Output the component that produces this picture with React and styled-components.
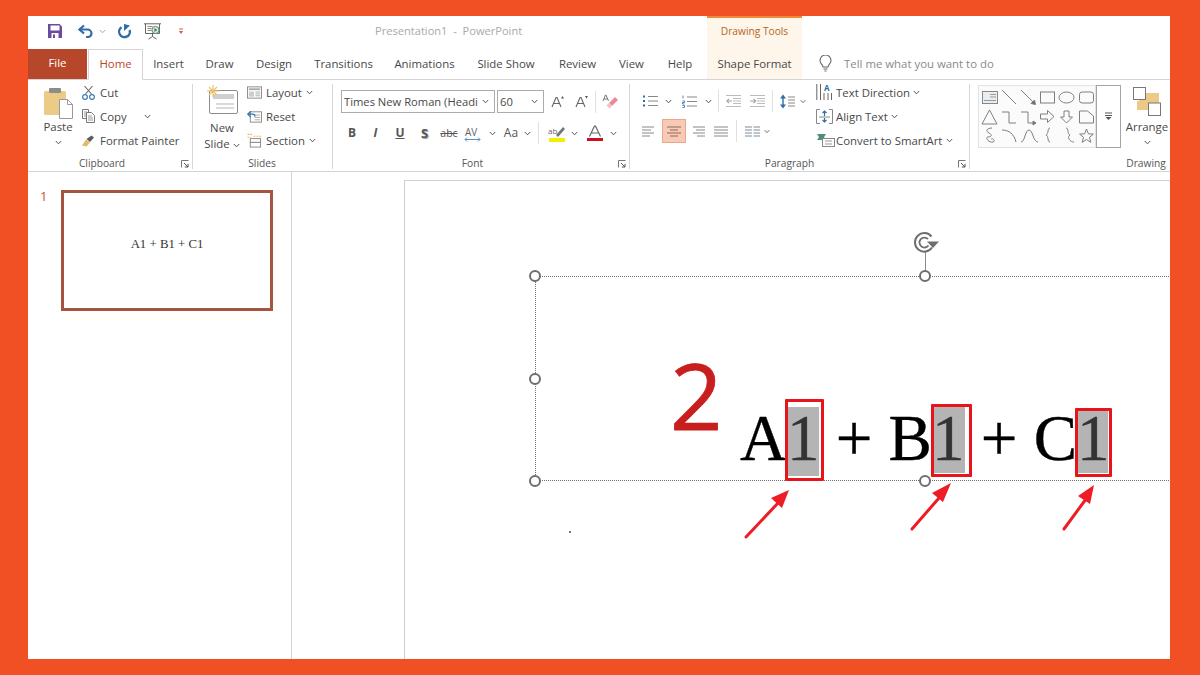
import React from "react";
import styled, { createGlobalStyle } from "styled-components";

const Global = createGlobalStyle`
  html, body { margin: 0; padding: 0; width: 1200px; height: 675px; overflow: hidden; background: #F15025; }
  #root { width: 1200px; height: 675px; }
  * { box-sizing: border-box; }
`;

const Page = styled.div`
  width: 1200px; height: 675px; background: #F15025;
  padding: 16px 30px 16px 28px;
  font-family: "Open Sans", "Liberation Sans", sans-serif;
  font-size: 11.4px; color: #484848;
`;
const Win = styled.div`
  width: 1142px; height: 643px; background: #fff; overflow: hidden;
  display: flex; flex-direction: column;
`;

/* title bar */
const TitleBar = styled.div`display: flex; height: 33px; flex: none; padding-left: 15px;`;
const Cell = styled.div`
  width: ${p => p.$w}px; margin-left: ${p => p.$ml || 0}px; flex: none;
  display: flex; align-items: center; justify-content: center;
  height: ${p => p.$h || 24}px;
`;
const DocTitle = styled.div`
  margin-left: 189px; width: 332px; color: #a9a9a9; line-height: 30px; font-size: 11.1px; white-space: pre; flex: none;
`;
const ContextHead = styled.div`
  width: 95px; background: #FEF5EB; border-top: 2px solid #EE8B3A; color: #B5651D;
  font-size: 10.2px; text-align: center; line-height: 26px; flex: none;
`;

/* tabs */
const TabBar = styled.div`display: flex; height: 31px; flex: none; border-bottom: 1px solid #d4d4d4; position: relative;`;
const FileTab = styled.div`
  width: 59px; height: 30px; background: #B7472A; color: #fff; text-align: center; line-height: 28px; margin-right: 1px;
`;
const Tab = styled.div`
  width: ${p => p.$w}px; flex: none; height: 31px; text-align: center; line-height: 30px; color: #484848;
`;
const HomeTab = styled(Tab)`
  border: 1px solid #d4d4d4; border-bottom: 1px solid #fff; color: #B7472A; line-height: 28px;
`;
const ContextTab = styled(Tab)`background: #FEF5EB; margin-left: 2px; height: 30px;`;
const TellMe = styled.div`
  display: flex; align-items: center; gap: 12px; margin-left: 17px; color: #8a8a8a; height: 29px;
`;

/* ribbon */
const Ribbon = styled.div`display: flex; height: 92px; flex: none; border-bottom: 1px solid #d4d4d4;`;
const Group = styled.div`
  width: ${p => p.$w}px; flex: none; position: relative; display: flex; flex-direction: column;
  &::after {
    content: ""; display: ${p => p.$last ? "none" : "block"};
    position: absolute; right: 0; top: 4px; bottom: 2px; width: 1px; background: #d6d6d6;
  }
`;
const GroupBody = styled.div`
  flex: 1; display: flex; padding-left: ${p => p.$pl || 0}px; padding-top: ${p => p.$pt || 0}px; min-height: 0;
`;
const GroupLabel = styled.div`
  height: 18px; line-height: 20px; flex: none; text-align: center; font-size: 10.2px; color: #555;
  padding-right: ${p => p.$pr || 0}px;
`;
const DrawingLabel = styled(GroupLabel)`width: 60px; margin-left: 146px;`;
const Launcher = styled.div`position: absolute; right: 4px; bottom: 3px; display: flex;`;
const Stack = styled.div`display: flex; flex-direction: column; margin-left: ${p => p.$ml || 0}px; flex: none;`;
const SmallBtn = styled.div`
  height: 24px; display: flex; align-items: center; gap: ${p => p.$gap || 4}px; white-space: nowrap;
`;
const IconSlot = styled.span`width: ${p => p.$w || 15}px; display: flex; justify-content: center; flex: none;`;
const LargeBtn = styled.div`
  width: ${p => p.$w}px; flex: none; margin-left: ${p => p.$ml || 0}px;
  display: flex; flex-direction: column; align-items: center; line-height: 16px;
`;
const LargeIcon = styled.div`height: ${p => p.$h || 38}px; display: flex; align-items: flex-end; margin-bottom: ${p => p.$mb || 0}px;`;
const NoWrapLine = styled.div`white-space: nowrap;`;
const Row = styled.div`display: flex; align-items: center; height: ${p => p.$h}px; margin-top: ${p => p.$mt || 0}px;`;
const FontBox = styled.div`
  width: ${p => p.$w}px; height: 23px; border: 1px solid #ababab; margin-left: ${p => p.$ml || 0}px; flex: none;
  display: flex; align-items: center; justify-content: space-between; padding: 0 5px 0 2px; font-size: 11.2px; white-space: nowrap;
`;
const Sep = styled.div`width: 1px; height: ${p => p.$h || 22}px; background: #e0e0e0; margin: 0 ${p => p.$mx || 3}px; flex: none;`;
const ActiveCell = styled(Cell)`background: #F8C9B5; border: 1px solid #E9A88E;`;
const Glyph = styled.span`
  font-family: ${p => p.$serif ? '"Liberation Serif", serif' : '"Open Sans", sans-serif'};
  font-weight: ${p => p.$bold ? 700 : 400}; font-style: ${p => p.$italic ? "italic" : "normal"};
  font-size: ${p => p.$size || 12}px; color: ${p => p.$color || "#555"};
  text-decoration: ${p => p.$deco || "none"}; line-height: 1;
  text-shadow: ${p => p.$shadow ? "1px 1px 1px #999" : "none"};
`;
const Gallery = styled.div`
  width: 118px; height: 63px; border: 1px solid #e2e2e2; background: #fbfbfb; margin-left: 8px; margin-top: 5px; flex: none; display: flex;
`;
const GalleryMore = styled.div`
  width: 25px; height: 63px; border: 1px solid #a5a5a5; margin-top: 5px; flex: none; display: flex; align-items: center; justify-content: center;
`;

/* lower area */
const Lower = styled.div`flex: 1; display: flex; min-height: 0;`;
const Panel = styled.div`
  width: 264px; flex: none; border-right: 1px solid #d4d4d4; padding: 18px 0 0 12px; display: flex; align-items: flex-start;
`;
const ThumbNum = styled.div`width: 21px; color: #C4553D; font-size: 13px; line-height: 12px;`;
const Thumb = styled.div`
  width: 212px; height: 121px; border: 3px solid #A5543F; display: flex; justify-content: center; padding-top: 44px;
  font-family: "Liberation Serif", serif; font-size: 12.8px; color: #333; white-space: pre;
`;
const Stage = styled.div`flex: 1; overflow: hidden; padding: 8px 0 0 112px;`;
const Slide = styled.div`
  width: 1000px; height: 600px; border: 1px solid #cfcfcf; position: relative; background: #fff;
`;
/* slide canvas items: origin of Canvas is x=406, y=181 on the page */
const Canvas = styled.div`position: absolute; left: 1px; top: 0; width: 998px; height: 598px;`;
const Frame = styled.div`
  position: absolute; left: 129px; top: 95px; width: 900px; height: 205px;
  border: 1px dotted #6f6f6f;
`;
const Handle = styled.div`
  position: absolute; left: ${p => p.$x - 6}px; top: ${p => p.$y - 6}px; width: 12px; height: 12px;
  border: 2px solid #6e6e6e; border-radius: 50%; background: #fff;
`;
const RotateStem = styled.div`position: absolute; left: 519px; top: 70px; width: 1px; height: 25px; background: #8a8a8a;`;
const RotateIcon = styled.div`position: absolute; left: 508px; top: 51px; display: flex;`;
const BigTwo = styled.div`
  position: absolute; left: 264px; top: 149px; font-family: "Open Sans", sans-serif; font-size: 92px; line-height: 130px; color: #C81E1E;
  -webkit-text-stroke: 0.8px #C81E1E;
`;
const Highlight = styled.div`
  position: absolute; left: ${p => p.$x}px; top: ${p => p.$y}px; width: ${p => p.$w}px; height: ${p => p.$h}px; background: #B4B4B4;
`;
const Formula = styled.div`
  position: absolute; left: 334px; top: 224.6px; font-family: "Liberation Serif", serif; font-size: 65px; line-height: 65px; color: #000; white-space: pre;
  -webkit-text-stroke: 0.4px #000;
`;
const One = styled.span`color: #333; -webkit-text-stroke: 0.4px #333;`;
const RedBox = styled.div`
  position: absolute; left: ${p => p.$x}px; top: ${p => p.$y}px; width: ${p => p.$w}px; height: ${p => p.$h}px;
  border: 3px solid #E8141C; border-radius: 1px;
`;
const Overlay = styled.svg`position: absolute; left: 0; top: 0; pointer-events: none;`;
const Speck = styled.div`position: absolute; left: 163px; top: 350px; width: 2px; height: 2px; background: #777;`;

/* icons */
const Chev = ({ c = "#555" }) => (
  <svg width="7" height="5" viewBox="0 0 7 5"><path d="M.8 1 3.5 3.8 6.2 1" fill="none" stroke={c} strokeWidth="1" /></svg>
);
const S = ({ w, h, children }) => <svg width={w} height={h} viewBox={`0 0 ${w} ${h}`} fill="none">{children}</svg>;

const SaveIco = () => <S w={14} h={14}><path d="M0 0h11.5L14 2.5V14H0z" fill="#6A4C9C" /><rect x="2.5" y="1.5" width="9" height="5" fill="#fff" /><rect x="3.5" y="9" width="7" height="5" fill="#fff" /><rect x="5" y="10.5" width="2" height="3.5" fill="#6A4C9C" /></S>;
const UndoIco = () => <S w={16} h={14}><path d="M6 1.5 1.5 5.5 6 9.5" stroke="#2F6DA8" strokeWidth="2.2" /><path d="M2 5.5h7.5a4 4 0 0 1 4 4v0a3.5 3.5 0 0 1-3.5 3.5H8" stroke="#2F6DA8" strokeWidth="2.2" /></S>;
const RedoIco = () => <S w={15} h={15}><path d="M4.5 3.2A5.4 5.4 0 1 0 12.6 6" stroke="#2F6DA8" strokeWidth="2.4" /><path d="M7 0v7L13 1.500z" fill="#2F6DA8" /></S>;
const PresentIco = () => <S w={18} h={17}><path d="M0 .8h17M1.5 1v9.5h14V1" stroke="#666" strokeWidth="1" /><path d="M3.5 3.5h5M3.5 5.5h4M3.5 7.5h4" stroke="#888" /><circle cx="11.5" cy="7" r="3.6" fill="#D7E8DC" stroke="#5E8A72" /><path d="m10.4 5 3 2-3 2z" fill="#4F7F66" /><path d="M8.5 10.500v3M4.500 16l4-2.500 4 2.500" stroke="#666" /></S>;
const TinyDrop = () => <S w={6} h={7}><path d="M1 1h4" stroke="#C8674E" /><path d="m.8 3 2.2 3 2.2-3z" fill="#C8674E" /></S>;

const PasteIco = () => <S w={29} h={31}><rect x="0" y="3" width="22" height="24" rx="1.5" fill="#EBCB85" /><rect x="5" y="0" width="12" height="5" rx="1" fill="#8C8C8C" /><path d="M15.5 11.5h8l5 5v14h-13z" fill="#fff" stroke="#9a9a9a" /><path d="M23.5 11.5v5h5" stroke="#9a9a9a" /></S>;
const CutIco = () => <S w={13} h={15}><path d="M2.5 1 9.5 9M10.5 1 3.5 9" stroke="#666" strokeWidth="1.1" /><circle cx="3" cy="12" r="2.4" stroke="#3F7FB5" strokeWidth="1.2" /><circle cx="10" cy="12" r="2.4" stroke="#3F7FB5" strokeWidth="1.2" /></S>;
const CopyIco = () => <S w={13} h={14}><path d="M.5.5h6v3M.5.5v9h3.5" stroke="#777" /><path d="M4.5 3.5h5l3 3v7h-8z" fill="#fff" stroke="#777" /><path d="M6 7h4M6 9h5M6 11h5M2 3h3M2 5h2M2 7h2" stroke="#999" /></S>;
const PainterIco = () => <S w={15} h={13}><path d="M1 11.5 5 5.5l4 3-3.5 4z" fill="#E3B96A" /><path d="m5.5 5 3.5 3 4-4.5-2.5-2z" fill="#5c5c5c" /></S>;
const NewSlideIco = () => <S w={31} h={29}><rect x="2.5" y="5.5" width="28" height="23" rx="1.5" fill="#fff" stroke="#8c8c8c" /><rect x="6" y="9" width="21" height="5" fill="#cfcfcf" /><path d="M9 19h18M9 23h18" stroke="#b5b5b5" /><path d="M6 0v12M0 6h12M2 2l8 8M10 2l-8 8" stroke="#EDC36A" strokeWidth="1.2" /></S>;
const LayoutIco = () => <S w={16} h={13}><rect x=".5" y=".5" width="15" height="12" fill="#fff" stroke="#888" /><rect x="2" y="2" width="12" height="2" fill="#aaa" /><rect x="2" y="5.5" width="5.5" height="5.5" fill="#ccc" /><path d="M9 6h5M9 8h5M9 10h5" stroke="#aaa" /></S>;
const ResetIco = () => <S w={16} h={13}><rect x="3.5" y="1.5" width="12" height="11" fill="#fff" stroke="#888" /><path d="M8 5h6M8 7.5h6M8 10h6" stroke="#aaa" /><path d="M4 1 .8 4 4 7M1 4h5a2.5 2.5 0 0 1 2.5 2.5" stroke="#2F78B4" strokeWidth="1.4" /></S>;
const SectionIco = () => <S w={16} h={15}><path d="M.5 1h5M.5 4h4M7 3h8" stroke="#E3B96A" strokeWidth="1.2" strokeDasharray="2 1" /><rect x="3.5" y="5.5" width="11" height="4" fill="#fff" stroke="#888" /><rect x="3.5" y="9.5" width="11" height="5" fill="#fff" stroke="#888" /></S>;
const LaunchIco = () => <S w={8} h={8}><path d="M.5 7.5v-7h7" stroke="#777" /><path d="m3 3 4 4M7 3.8V7H3.8" stroke="#555" /></S>;
const ClearIco = () => <S w={16} h={16}><path d="m7 9 6-6 3 3-6 6z" fill="#E98A99" /><path d="M4.5 11.5 7 9l3 3-2.5 2.5z" fill="#F3C0C8" /><path d="M1 7 3.5 1h.5L6.5 7M2 5h3.5" stroke="#777" /></S>;
const SizeA = ({ up }) => <S w={13} h={13}><path d="M1 12 5 2.5h1L10 12M2.6 8.5h5.8" stroke="#666" strokeWidth="1.1" /><path d={up ? "M10 3.5 11.5 1 13 3.5z" : "M10 1h3L11.5 3.5z"} fill="#555" /></S>;
const AVIco = () => <svg width="18" height="17" viewBox="0 0 18 17" fill="none"><text x="1" y="11" fontFamily="Open Sans, sans-serif" fontSize="10" fill="#666">AV</text><path d="M1 14.500h15" stroke="#5B8DBE" /><path d="M3 12.500 1 14.500l2 2M14 12.500l2 2-2 2" stroke="#5B8DBE" /></svg>;
const HighlightIco = () => <S w={18} h={17}><text x="0" y="9" fontFamily="Open Sans, sans-serif" fontSize="8" fill="#666">ab</text><path d="m8 10 7-8 2 2-7 8z" fill="#777" /><rect x="1" y="13" width="16" height="4" fill="#F4F000" /></S>;
const ColorA = () => <S w={16} h={16}><path d="M2.5 11.5 7.5 1h1l5 10.5M4.5 8h7" stroke="#666" strokeWidth="1.2" /><rect x="0" y="13" width="16" height="3" fill="#C8101E" /></S>;
const Bullets = () => <S w={15} h={12}><path d="M0 1.5h2M0 6h2M0 10.5h2" stroke="#2F6DA8" strokeWidth="2" /><path d="M5 1.5h10M5 6h10M5 10.5h10" stroke="#888" /></S>;
const Numbers = () => <S w={15} h={13}><path d="M1 .5v3M.5 6h2v1.5h-2V9h2M.5 10.5h2v2h-2" stroke="#2F6DA8" strokeWidth=".8" /><path d="M5 2h10M5 6.5h10M5 11h10" stroke="#888" /></S>;
const IndentDec = () => <S w={15} h={12}><path d="M0 .5h15M7 3.5h8M7 6h8M7 8.5h8M0 11.5h15" stroke="#bbb" /><path d="M6 6H1M3 3.8 .8 6 3 8.2" stroke="#9aa9b8" strokeWidth="1.2" /></S>;
const IndentInc = () => <S w={15} h={12}><path d="M0 .5h15M7 3.5h8M7 6h8M7 8.5h8M0 11.5h15" stroke="#bbb" /><path d="M0 6h5M3.5 3.8 5.7 6 3.5 8.2" stroke="#9aa9b8" strokeWidth="1.2" /></S>;
const LineSpace = () => <S w={15} h={15}><path d="M3 2v11" stroke="#2F6DA8" strokeWidth="1.4" /><path d="M0 4.5 3 .5l3 4zM0 10.5l3 4 3-4z" fill="#2F6DA8" /><path d="M8 3h7M8 6h7M8 9h7M8 12h7" stroke="#888" /></S>;
const Align = ({ lines, c = "#888" }) => <S w={14} h={11}>{lines.map(([a, b], i) => <path key={i} d={`M${a} ${1 + i * 3}H${b}`} stroke={c} />)}</S>;
const Columns = () => <S w={15} h={11}><path d="M0 1h7M0 4h7M0 7h7M0 10h7M8.5 1H15M8.5 4H15M8.5 7H15M8.5 10H15" stroke="#7d8b99" /></S>;
const TextDir = () => <S w={17} h={20}><path d="M.8 2v16M4.5 2v16M8 11v7M12 11v7M15.500 11v7" stroke="#666" /><text x="8" y="9" fontFamily="Open Sans, sans-serif" fontSize="8" fontWeight="700" fill="#2F6DA8">A</text></S>;
const AlignTextIco = () => <S w={17} h={15}><path d="M4 .5H.5v14H4M13 .5h3.5v14H13" stroke="#888" /><path d="M8.5 7V2M6.5 4l2-2 2 2M8.5 9v4M6.5 11l2 2 2-2" stroke="#2F6DA8" strokeWidth="1.2" /><path d="M3 8h11" stroke="#888" /></S>;
const SmartArt = () => <S w={18} h={14}><path d="M0 1h9l-2 3 2 3H0l2-3z" fill="#4E8E7C" /><rect x="5.5" y="5.5" width="12" height="8" fill="#fff" stroke="#888" /><path d="M8 8h7M8 11h7" stroke="#999" /></S>;
const Bulb = () => <S w={13} h={17}><path d="M4 12c0-2-3-3.500-3-6.500a5.500 5.500 0 0 1 11 0C12 8.500 9 10 9 12z" stroke="#666" strokeWidth="1.1" /><path d="M4.500 14h4M5.500 16h2" stroke="#666" /></S>;
const ArrangeIco = () => <S w={28} h={29}><rect x="6" y="6" width="20" height="17" fill="#EDC987" /><rect x="4" y="14" width="10" height="9" fill="#EDC987" /><rect x=".5" y=".5" width="12" height="12" fill="#fff" stroke="#777" /><rect x="15.500" y="16" width="12" height="12.500" fill="#fff" stroke="#777" /></S>;
const MoreIco = () => <S w={9} h={9}><path d="M1 1h7M1 3.500h7" stroke="#555" /><path d="m1.500 5 3 3 3-3z" fill="#555" /></S>;
const RotateGlyph = () => (
  <svg width="25" height="21" viewBox="0 0 25 21" fill="none">
    <path d="M17.500 4.500A9.300 9.300 0 1 0 18 15.500" stroke="#6e6e6e" strokeWidth="2" />
    <path d="M14 7a5 5 0 1 0 .5 6.500" stroke="#6e6e6e" strokeWidth="1.800" />
    <path d="M13 9.500h12L19 16z" fill="#6e6e6e" />
  </svg>
);

const Shapes = () => (
  <svg width="116" height="61" viewBox="0 0 116 61" fill="none" stroke="#7f7f7f" strokeWidth="1">
    <rect x="3.500" y="5.500" width="15" height="12" fill="#e9eef3" stroke="#888" /><path d="M11 8.500h6M11 11h6M5 14.500h12" stroke="#999" />
    <path d="m23 4 14 14M42 4l14 14" /><path d="m52 17.500 4.500 1-1-4.500z" fill="#666" />
    <rect x="61.500" y="6" width="14" height="11" /><ellipse cx="87.500" cy="11.500" rx="7.500" ry="5.500" /><rect x="100.500" y="6" width="14" height="11" rx="2.500" />
    <path d="M3 38 10.500 24 18 38z" /><path d="M23 26h7v11h7M42 26h7v11h6" /><path d="m54 35 3 2-3 2z" fill="#666" />
    <path d="M61.500 28h7v-3.500l6.500 6-6.500 6V33h-7zM85 25h5v6h3.500l-6 6-6-6H85z" /><path d="M100.500 25h8l6 5v7h-14z" />
    <path d="M13 42c-5 0-7 3-3 5s2 4-1 4 0 6 5 5c3-1 0-4-2-3" />
    <path d="M23 44c7 0 12 4 14 12M42 56c4 0 4-12 8-12s4 12 9 12" />
    <path d="M71 42c-3 0-1 6-4 7 3 1 1 7 4 7M87 42c3 0 1 6 4 7-3 1-1 7 4 7" />
    <path d="m107.500 43 1.900 4.800 5 .3-3.900 3.200 1.300 5-4.300-2.800-4.300 2.800 1.300-5-3.900-3.200 5-.3z" />
  </svg>
);

const TABS = [["Insert", 51], ["Draw", 51], ["Design", 58], ["Transitions", 81], ["Animations", 81], ["Slide Show", 82], ["Review", 61], ["View", 47], ["Help", 50]];

export default function App() {
  return (
    <Page>
      <Global />
      <Win>
        <TitleBar>
          <Cell $w={24} $h={30}><SaveIco /></Cell>
          <Cell $w={20} $ml={9} $h={30}><UndoIco /></Cell>
          <Cell $w={8} $ml={2} $h={30}><Chev c="#aaa" /></Cell>
          <Cell $w={20} $ml={8} $h={30}><RedoIco /></Cell>
          <Cell $w={20} $ml={9} $h={30}><PresentIco /></Cell>
          <Cell $w={10} $ml={13} $h={30}><TinyDrop /></Cell>
          <DocTitle>Presentation1  -  PowerPoint</DocTitle>
          <ContextHead>Drawing Tools</ContextHead>
        </TitleBar>
        <TabBar>
          <FileTab>File</FileTab>
          <HomeTab $w={55}>Home</HomeTab>
          {TABS.map(([t, w]) => <Tab key={t} $w={w}>{t}</Tab>)}
          <ContextTab $w={95}>Shape Format</ContextTab>
          <TellMe><Bulb />Tell me what you want to do</TellMe>
        </TabBar>
        <Ribbon>
          <Group $w={165}>
            <GroupBody $pl={16}>
              <LargeBtn $w={28}>
                <LargeIcon $h={39}><PasteIco /></LargeIcon>
                <div>Paste</div>
                <Cell $w={10} $h={14}><Chev /></Cell>
              </LargeBtn>
              <Stack $ml={9}>
                <SmallBtn><IconSlot><CutIco /></IconSlot>Cut</SmallBtn>
                <SmallBtn><IconSlot><CopyIco /></IconSlot>Copy<Cell $w={8} $ml={13}><Chev /></Cell></SmallBtn>
                <SmallBtn><IconSlot><PainterIco /></IconSlot>Format Painter</SmallBtn>
              </Stack>
            </GroupBody>
            <GroupLabel $pr={17}>Clipboard</GroupLabel>
            <Launcher><LaunchIco /></Launcher>
          </Group>
          <Group $w={140}>
            <GroupBody $pl={12}>
              <LargeBtn $w={34}>
                <LargeIcon $h={34} $mb={6}><NewSlideIco /></LargeIcon>
                <div>New</div>
                <NoWrapLine>Slide <Chev /></NoWrapLine>
              </LargeBtn>
              <Stack $ml={8}>
                <SmallBtn><IconSlot><LayoutIco /></IconSlot>Layout<Chev /></SmallBtn>
                <SmallBtn><IconSlot><ResetIco /></IconSlot>Reset</SmallBtn>
                <SmallBtn><IconSlot><SectionIco /></IconSlot>Section<Chev /></SmallBtn>
              </Stack>
            </GroupBody>
            <GroupLabel $pr={2}>Slides</GroupLabel>
          </Group>
          <Group $w={297}>
            <GroupBody $pl={8} $pt={10}>
              <Stack>
                <Row $h={23}>
                  <FontBox $w={154}>Times New Roman (Headi<Chev /></FontBox>
                  <FontBox $w={47} $ml={2}>60<Chev /></FontBox>
                  <Cell $w={22} $ml={2}><SizeA up /></Cell>
                  <Cell $w={23} $ml={2}><SizeA /></Cell>
                  <Sep $mx={2} />
                  <Cell $w={24}><ClearIco /></Cell>
                </Row>
                <Row $h={24} $mt={8}>
                  <Cell $w={22}><Glyph $bold $size={12}>B</Glyph></Cell>
                  <Cell $w={25}><Glyph $bold $italic $size={12}>I</Glyph></Cell>
                  <Cell $w={24}><Glyph $bold $size={12} $deco="underline">U</Glyph></Cell>
                  <Cell $w={25}><Glyph $bold $size={13} $shadow>S</Glyph></Cell>
                  <Cell $w={24}><Glyph $size={10.500} $deco="line-through">abc</Glyph></Cell>
                  <Cell $w={24}><AVIco /></Cell>
                  <Cell $w={8} $ml={3}><Chev /></Cell>
                  <Cell $w={22} $ml={4}><Glyph $size={12}>Aa</Glyph></Cell>
                  <Cell $w={8} $ml={1}><Chev /></Cell>
                  <Sep $mx={7} />
                  <Cell $w={20} $ml={1}><HighlightIco /></Cell>
                  <Cell $w={8} $ml={3}><Chev /></Cell>
                  <Cell $w={18} $ml={8}><ColorA /></Cell>
                  <Cell $w={8} $ml={5}><Chev /></Cell>
                </Row>
              </Stack>
            </GroupBody>
            <GroupLabel $pr={18}>Font</GroupLabel>
            <Launcher><LaunchIco /></Launcher>
          </Group>
          <Group $w={340}>
            <GroupBody $pl={7}>
              <Stack>
                <Row $h={24} $mt={9}>
                  <Cell $w={27}><Bullets /></Cell>
                  <Cell $w={8}><Chev /></Cell>
                  <Cell $w={23} $ml={6}><Numbers /></Cell>
                  <Cell $w={14}><Chev /></Cell>
                  <Sep $mx={3} />
                  <Cell $w={23}><IndentDec /></Cell>
                  <Cell $w={24}><IndentInc /></Cell>
                  <Sep $mx={3} />
                  <Cell $w={23}><LineSpace /></Cell>
                  <Cell $w={6} $ml={1}><Chev /></Cell>
                </Row>
                <Row $h={24} $mt={6}>
                  <Cell $w={24}><Align lines={[[0, 12], [0, 9], [0, 12], [0, 8]]} /></Cell>
                  <ActiveCell $w={24} $ml={1}><Align lines={[[0, 14], [3, 11], [0, 14], [3, 11]]} c="#8a6a5c" /></ActiveCell>
                  <Cell $w={22} $ml={1}><Align lines={[[2, 14], [5, 14], [2, 14], [6, 14]]} /></Cell>
                  <Cell $w={24}><Align lines={[[0, 14], [0, 14], [0, 14], [0, 14]]} /></Cell>
                  <Sep $mx={3} />
                  <Cell $w={24}><Columns /></Cell>
                  <Cell $w={6}><Chev /></Cell>
                </Row>
              </Stack>
              <Stack $ml={10}>
                <SmallBtn $gap={3}><IconSlot $w={17}><TextDir /></IconSlot>Text Direction<Chev /></SmallBtn>
                <SmallBtn $gap={3}><IconSlot $w={17}><AlignTextIco /></IconSlot>Align Text<Chev /></SmallBtn>
                <SmallBtn $gap={1}><IconSlot $w={19}><SmartArt /></IconSlot>Convert to SmartArt<Cell $w={7} $ml={3}><Chev /></Cell></SmallBtn>
              </Stack>
            </GroupBody>
            <GroupLabel $pr={21}>Paragraph</GroupLabel>
            <Launcher><LaunchIco /></Launcher>
          </Group>
          <Group $w={200} $last>
            <GroupBody>
              <Gallery><Shapes /></Gallery>
              <GalleryMore><MoreIco /></GalleryMore>
              <LargeBtn $w={52}>
                <LargeIcon $h={36} $mb={3}><ArrangeIco /></LargeIcon>
                <div>Arrange</div>
                <Cell $w={10} $h={14}><Chev /></Cell>
              </LargeBtn>
            </GroupBody>
            <DrawingLabel>Drawing</DrawingLabel>
          </Group>
        </Ribbon>
        <Lower>
          <Panel>
            <ThumbNum>1</ThumbNum>
            <Thumb>A1 + B1 + C1</Thumb>
          </Panel>
          <Stage>
            <Slide>
              <Canvas>
                <Frame />
                <RotateStem />
                <RotateIcon><RotateGlyph /></RotateIcon>
                <Handle $x={129} $y={95} />
                <Handle $x={519} $y={95} />
                <Handle $x={129} $y={198} />
                <Handle $x={129} $y={300} />
                <Handle $x={519} $y={300} />
                <BigTwo>2</BigTwo>
                <Highlight $x={382} $y={226} $w={31} $h={69} />
                <Highlight $x={527} $y={226} $w={32} $h={66} />
                <Highlight $x={672} $y={229} $w={30} $h={63} />
                <Formula>A<One>1</One> + B<One>1</One> + C<One>1</One></Formula>
                <RedBox $x={379} $y={218} $w={39} $h={82} />
                <RedBox $x={525} $y={223} $w={41} $h={73} />
                <RedBox $x={669} $y={227} $w={37} $h={69} />
                <Overlay width="760" height="400" viewBox="0 0 760 400" fill="none">
                  <path d="M340 356 372 322M506 348 533 317M658 348 680 318" stroke="#EE1C25" strokeWidth="3" strokeLinecap="round" />
                  <path d="M383 309 376 327 365 317zM545 302 537 321 526 312zM688 304 684 323 672 315z" fill="#EE1C25" />
                </Overlay>
                <Speck />
              </Canvas>
            </Slide>
          </Stage>
        </Lower>
      </Win>
    </Page>
  );
}
